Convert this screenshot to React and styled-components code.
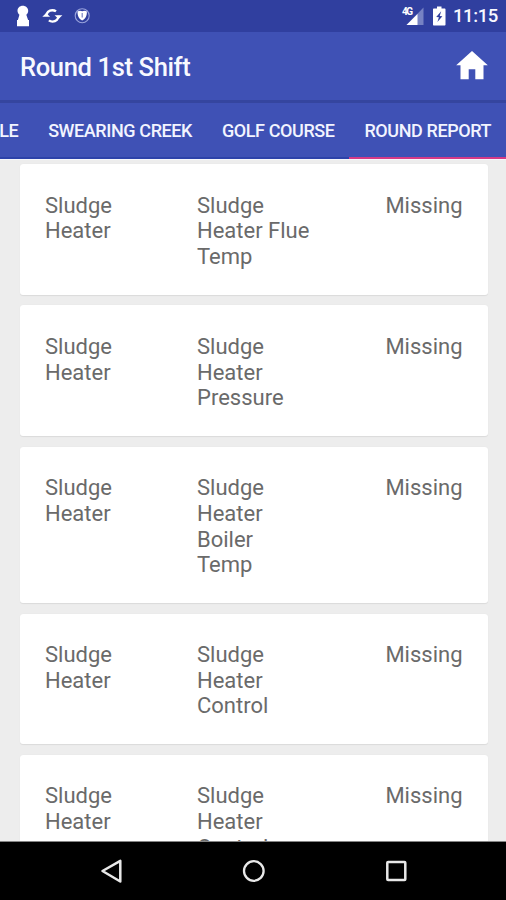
import React from 'react';
import styled, { createGlobalStyle } from 'styled-components';

const GlobalStyle = createGlobalStyle`
  * { box-sizing: border-box; }
  html, body { margin: 0; padding: 0; overflow: hidden; }
  body { font-family: Roboto, "Liberation Sans", sans-serif; }
`;

const Screen = styled.div`
  display: flex;
  flex-direction: column;
  width: 506px;
  height: 900px;
  overflow: hidden;
  background: #ededed;
`;

const StatusBar = styled.header`
  flex: none;
  display: flex;
  justify-content: space-between;
  height: 32px;
  background: #303f9f;
`;

const Clock = styled.span`
  width: 46px;
  margin-right: 7px;
  color: #f7f8ff;
  font-size: 18.5px;
  font-weight: 500;
  line-height: 33px;
  letter-spacing: -0.4px;
  white-space: nowrap;
`;

const StatusGroup = styled.div`
  display: flex;
`;

const AppBar = styled.div`
  flex: none;
  display: flex;
  align-items: center;
  justify-content: space-between;
  height: 71px;
  padding: 0 14px 0 20px;
  background: #3f51b5;
  border-bottom: 3px solid #35459f;
`;

const Title = styled.h1`
  margin: 2px 0 0;
  color: #f8f9ff;
  font-size: 25.5px;
  font-weight: 500;
  line-height: 30px;
  letter-spacing: -0.35px;
  white-space: nowrap;
`;

const HomeButton = styled.button`
  display: flex;
  width: 40px;
  height: 40px;
  padding: 0;
  border: 0;
  background: none;
`;

const Tabs = styled.nav`
  flex: none;
  display: flex;
  justify-content: flex-end;
  height: 56px;
  background: #3f51b5;
`;

const Tab = styled.a`
  flex: none;
  padding: 0 14.8px 0 15px;
  border-bottom: 2px solid ${(p) => (p.$active ? '#d53a86' : '#2d42a9')};
  color: #f2f4ff;
  font-size: 18px;
  font-weight: 500;
  line-height: 55px;
  letter-spacing: -0.4px;
  white-space: nowrap;
`;

const List = styled.main`
  flex: 1;
  min-height: 0;
  display: flex;
  flex-direction: column;
  gap: 10.3px;
  padding: 4.2px 18.5px 0 20px;
  overflow: hidden;
  border-top: 1px solid #f6f6fb;
  border-bottom: 1px solid #858585;
`;

const Card = styled.article`
  flex: none;
  display: grid;
  grid-template-columns: 152px 150px 1fr;
  padding: 28.4px 25px 25.1px;
  border-radius: 3px;
  background: #fff;
  box-shadow: 0 0.5px 1px rgba(0, 0, 0, 0.08);
  color: #6a6a6a;
  font-size: 22px;
  line-height: 25.8px;
`;

const Cell = styled.div`
  white-space: pre-line;
  text-align: ${(p) => p.$align || 'left'};
`;

const NavBar = styled.footer`
  flex: none;
  display: flex;
  justify-content: space-between;
  height: 58px;
  padding: 14px 95px 0 96px;
  background: #000;
`;

const rows = [
  ['Sludge\nHeater', 'Sludge\nHeater Flue\nTemp'],
  ['Sludge\nHeater', 'Sludge\nHeater\nPressure'],
  ['Sludge\nHeater', 'Sludge\nHeater\nBoiler\nTemp'],
  ['Sludge\nHeater', 'Sludge\nHeater\nControl'],
  ['Sludge\nHeater', 'Sludge\nHeater\nControl'],
];

const NotificationIcons = () => (
  <svg width="96" height="32" viewBox="0 0 96 32" fill="#fff">
    <path d="M22.800 5.800c-3.100 0-5.300 2.200-5.300 5 0 1.700.8 3.100 1.900 3.900L17.900 20h-.9v6.200h12V20h-.9l-1.800-5.300c1.200-.8 1.900-2.200 1.900-3.900 0-2.800-2.300-5-5.400-5z" />
    <path d="M46.300 16c0-3.200 2.600-5.800 6-5.800 1.400 0 2.700.4 3.700 1.200M58.600 15.800c0 3.200-2.600 5.800-6 5.800-1.400 0-2.700-.4-3.700-1.200" fill="none" stroke="#fff" strokeWidth="2.400" />
    <path d="M42.300 16.800h7.800l-3.900-3.900zM62.400 15.200h-7.800l3.900 3.900z" />
    <circle cx="82.200" cy="15.700" r="7" fill="none" stroke="#99a3dc" strokeWidth="1.100" />
    <path d="M82.200 11.200c1.500-.8 3.200-.8 4.700.3 0 4.600-1.200 7-4.700 9-3.500-2-4.700-4.400-4.700-9 1.500-1.100 3.200-1.100 4.700-.3z" />
    <path d="M82.200 13v4.500" stroke="#7884c5" strokeWidth="1.200" />
  </svg>
);

const SignalText = styled.text`
  font: 700 10px Roboto, sans-serif;
`;

const DeviceIcons = () => (
  <svg width="52" height="32" viewBox="0 0 52 32" fill="#fff">
    <path d="M22.500 7.500V25H5.500z" fill="#7682c3" />
    <path d="M16.500 14v11h-11z" />
    <SignalText x="1" y="15.200" textLength="11">4G</SignalText>
    <path d="M36 6.500h4.500v2h3c.6 0 1 .4 1 1v15c0 .6-.4 1-1 1H33c-.6 0-1-.4-1-1v-15c0-.6.4-1 1-1h3z" />
    <path d="M40.200 11.300l-5 5.700 2.700.3-1.500 4.600 5-5.600-2.700-.4z" fill="#303f9f" />
  </svg>
);

const HomeIcon = () => (
  <svg width="40" height="40" viewBox="0 0 40 40" fill="#fff">
    <path d="M20 5L4.200 19.300h4.300v14h8.200v-10h6.600v10h8.200v-14h4.300z" />
  </svg>
);

const BackIcon = () => (
  <svg width="30" height="30" viewBox="0 0 30 30" fill="none" stroke="#e8e8e8" strokeWidth="2.500" strokeLinejoin="round">
    <path d="M24.300 4.800v20.700L6.500 15z" />
  </svg>
);

const CircleIcon = () => (
  <svg width="30" height="30" viewBox="0 0 30 30" fill="none" stroke="#e8e8e8" strokeWidth="2.300">
    <circle cx="14.800" cy="15" r="9.800" />
  </svg>
);

const SquareIcon = () => (
  <svg width="30" height="30" viewBox="0 0 30 30" fill="none" stroke="#e8e8e8" strokeWidth="2.500">
    <rect x="6.300" y="6" width="18" height="18" rx="0.800" />
  </svg>
);

export default function App() {
  return (
    <Screen>
      <GlobalStyle />
      <StatusBar>
        <NotificationIcons />
        <StatusGroup>
          <DeviceIcons />
          <Clock>11:15</Clock>
        </StatusGroup>
      </StatusBar>
      <AppBar>
        <Title>Round 1st Shift</Title>
        <HomeButton aria-label="Home"><HomeIcon /></HomeButton>
      </AppBar>
      <Tabs>
        <Tab>LE</Tab>
        <Tab>SWEARING CREEK</Tab>
        <Tab>GOLF COURSE</Tab>
        <Tab $active>ROUND REPORT</Tab>
      </Tabs>
      <List>
        {rows.map(([equipment, reading], i) => (
          <Card key={i}>
            <Cell>{equipment}</Cell>
            <Cell>{reading}</Cell>
            <Cell $align="right">Missing</Cell>
          </Card>
        ))}
      </List>
      <NavBar>
        <BackIcon />
        <CircleIcon />
        <SquareIcon />
      </NavBar>
    </Screen>
  );
}
